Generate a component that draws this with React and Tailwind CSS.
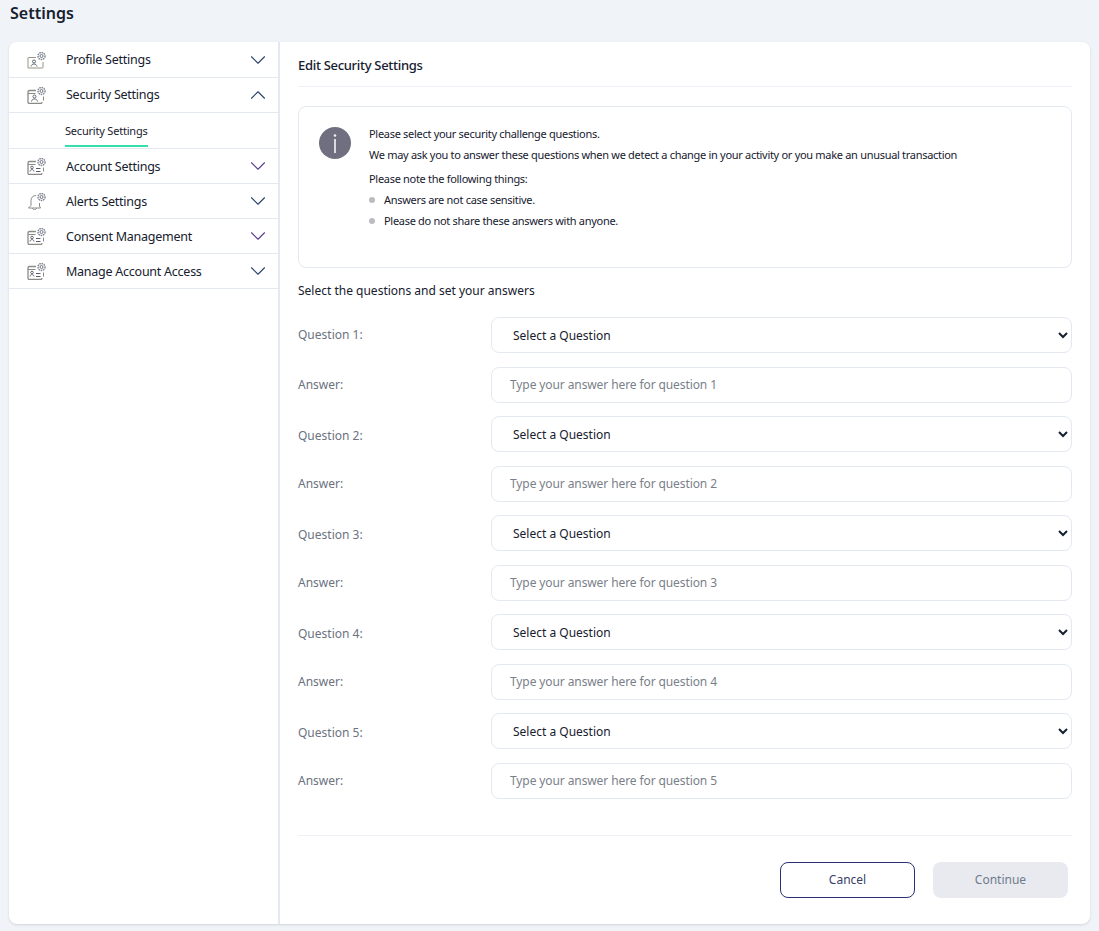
import React from 'react';
import { ChevronDown, ChevronUp } from 'lucide-react';

const GearBadge = () => (
  <g fill="none">
    <circle cx="14.500" cy="4" r="1.500" stroke="#6f7482" strokeWidth="1" />
    <circle cx="14.500" cy="4" r="3.500" stroke="#7d8290" strokeWidth="1.400" strokeDasharray="1.600 0.700" />
  </g>
);

const ProfileIcon = () => (
  <svg viewBox="0 0 19 17" className="h-[17px] w-[19px]" fill="none">
    <path d="M9 5.500H1.500a.5.500 0 0 0-.5.500v10h14.500a.5.500 0 0 0 .5-.5V10" stroke="#9a9488" strokeWidth="1" />
    <circle cx="7" cy="9.500" r="1.500" stroke="#555b68" strokeWidth="0.900" />
    <path d="M4 14.500c.4-1.700 1.400-2.500 3-2.500s2.600.8 3 2.500" stroke="#555b68" strokeWidth="0.900" />
    <GearBadge />
  </svg>
);

const LockCardIcon = () => (
  <svg viewBox="0 0 19 17" className="h-[17px] w-[19px]" fill="none">
    <path d="M9 3.500H2.500A1.500 1.500 0 0 0 1 5v10a1.500 1.500 0 0 0 1.500 1.500h11A1.500 1.500 0 0 0 15 15" stroke="#8c8a86" strokeWidth="1.300" />
    <path d="M1 6.500h7.500" stroke="#8c8a86" strokeWidth="1" />
    <circle cx="7.500" cy="9.500" r="1.500" stroke="#555b68" strokeWidth="0.900" />
    <path d="M4.500 14.500c.3-1.700 1.300-2.500 3-2.500s2.700.8 3 2.500" stroke="#555b68" strokeWidth="0.900" />
    <path d="M16.500 9.500v4" stroke="#8c8a86" strokeWidth="1" />
    <GearBadge />
  </svg>
);

const AccountIcon = () => (
  <svg viewBox="0 0 19 17" className="h-[17px] w-[19px]" fill="none">
    <path d="M9 3.500H2.500A1.500 1.500 0 0 0 1 5v10a1.500 1.500 0 0 0 1.500 1.500h11a1.500 1.500 0 0 0 1.500-1.500" stroke="#8c8a86" strokeWidth="1.300" />
    <path d="M1 6.500h7.500" stroke="#8c8a86" strokeWidth="1" />
    <circle cx="5" cy="9.500" r="1.300" stroke="#555b68" strokeWidth="0.900" />
    <path d="M3 13.500c.2-1.300.9-1.900 2-1.900s1.800.6 2 1.900" stroke="#555b68" strokeWidth="0.900" />
    <path d="M9 10.500h4.500M9 13.500h4.500" stroke="#555b68" strokeWidth="1" />
    <path d="M16.500 9.500v4" stroke="#8c8a86" strokeWidth="1" />
    <GearBadge />
  </svg>
);

const BellIcon = () => (
  <svg viewBox="0 0 19 17" className="h-[17px] w-[19px]" fill="none">
    <path d="M9 2.500C5.800 2.500 4 4.800 4 7.500v5L1.500 15h12L12.500 13v-3" stroke="#8c8a86" strokeWidth="1" />
    <path d="M5.500 15c.2 1.200 1 1.800 2 1.800s1.800-.6 2-1.800" stroke="#8c8a86" strokeWidth="1" />
    <GearBadge />
  </svg>
);

const menuItems = [
  { label: 'Profile Settings', icon: <ProfileIcon />, color: 'text-[#2b4468]' },
  { label: 'Security Settings', icon: <LockCardIcon />, open: true, color: 'text-[#2b4468]' },
  { label: 'Account Settings', icon: <AccountIcon />, color: 'text-[#5b3d8f]', low: true },
  { label: 'Alerts Settings', icon: <BellIcon />, color: 'text-[#2b4468]', low: true },
  { label: 'Consent Management', icon: <AccountIcon />, color: 'text-[#5b3d8f]', low: true },
  { label: 'Manage Account Access', icon: <AccountIcon />, color: 'text-[#2b4468]', low: true },
];

const questions = [1, 2, 3, 4, 5];

const SideMenu = () => (
  <aside className="w-[271px] shrink-0 border-r-2 border-[#e4e8f0] pt-px">
    {menuItems.map((item) => (
      <div key={item.label}>
        <div className="flex h-[35px] items-center border-b border-[#e4e8f0] pl-[18px] pr-[7px]">
          <span className="flex w-[39px] shrink-0 items-center">{item.icon}</span>
          <span className={`flex-1 text-[12.500px] tracking-[-0.25px] text-[#16202e] ${item.low ? 'pt-[2px]' : ''}`}>{item.label}</span>
          {item.open ? (
            <ChevronUp className={`h-[26px] w-[26px] ${item.color}`} strokeWidth={1} />
          ) : (
            <ChevronDown className={`h-[26px] w-[26px] ${item.color}`} strokeWidth={1} />
          )}
        </div>
        {item.open && (
          <div className="h-9 border-b border-[#e4e8f0] pl-14 pt-[10px]">
            <span className="block h-[24px] w-fit border-b-2 border-[#35dfae] text-[11px] leading-[16px] tracking-[-0.2px] text-[#16202e]">
              {item.label}
            </span>
          </div>
        )}
      </div>
    ))}
  </aside>
);

const InfoBox = () => (
  <div className="mt-[19px] flex h-[162px] rounded-lg border border-[#e4e8f0] pl-5 pt-5">
    <div className="flex h-8 w-8 shrink-0 items-center justify-center rounded-full bg-[#6f6f80]">
      <svg viewBox="0 0 4 19" className="h-[19px] w-1">
        <circle cx="2" cy="1.500" r="1.300" fill="#f2f2f5" />
        <rect x="1.100" y="5" width="1.800" height="14" fill="#e6e6ea" />
      </svg>
    </div>
    <div className="ml-[18px] text-[11px] leading-[20px] tracking-[-0.3px] text-[#16202e]">
      <p className="mt-[-3px]">Please select your security challenge questions.</p>
      <p className="mt-px">We may ask you to answer these questions when we detect a change in your activity or you make an unusual transaction</p>
      <p className="mt-[4px]">Please note the following things:</p>
      <ul className="mt-px">
        <li className="flex items-center gap-[9px] pb-px">
          <span className="h-[6px] w-[6px] rounded-full bg-[#bcbcc0]" />
          Answers are not case sensitive.
        </li>
        <li className="flex items-center gap-[9px]">
          <span className="h-[6px] w-[6px] rounded-full bg-[#bcbcc0]" />
          Please do not share these answers with anyone.
        </li>
      </ul>
    </div>
  </div>
);

const QuestionRow = ({ n }) => (
  <>
    <div className="flex h-[36px] items-center">
      <label className={`w-[193px] shrink-0 text-[12px] text-[#6b7280] ${n > 1 ? 'pt-[4px]' : ''}`}>Question {n}:</label>
      <select className="h-[36px] flex-1 rounded-lg border border-[#e4e8f0] bg-white pl-[17px] pr-[2px] text-[12px] text-[#16202e]">
        <option>Select a Question</option>
      </select>
    </div>
    <div className="mt-px flex h-[36px] items-center">
      <label className="w-[193px] shrink-0 text-[12px] text-[#6b7280]">Answer:</label>
      <input
        className="h-[36px] flex-1 rounded-lg border border-[#e4e8f0] bg-white px-[18px] pb-[2px] text-[12px] tracking-[-0.1px] text-[#16202e] placeholder:text-[#7a7f89]"
        placeholder={`Type your answer here for question ${n}`}
      />
    </div>
  </>
);

export default function App() {
  return (
    <div className="min-h-[931px] bg-[#f0f3f7] font-['Noto_Sans',sans-serif]">
      <h1 className="px-[10px] pt-px text-[16px] font-semibold leading-[24px] text-[#16202e]">Settings</h1>
      <div className="mx-[9px] mt-[17px] flex h-[882px] w-[1081px] overflow-hidden rounded-lg bg-white shadow-sm">
        <SideMenu />
        <main className="flex-1 px-[18px]">
          <h2 className="flex h-[45px] items-center border-b border-[#edf0f5] pt-[3px] text-[13px] font-medium tracking-[-0.3px] text-[#16202e]">
            Edit Security Settings
          </h2>
          <InfoBox />
          <p className="mt-[14px] text-[12px] leading-[18px] text-[#16202e]">Select the questions and set your answers</p>
          <div className="mt-[17px] flex flex-col gap-[13px]">
            {questions.map((n) => (
              <QuestionRow key={n} n={n} />
            ))}
          </div>
          <div className="mt-[36px] flex justify-end gap-[18px] border-t border-[#edf0f5] pr-1 pt-[26px]">
            <button className="h-9 w-[135px] rounded-lg border border-[#2a2f78] bg-white text-[12px] text-[#3a4168]">Cancel</button>
            <button className="h-9 w-[135px] rounded-lg bg-[#e9eaef] text-[12px] text-[#6f7a8c]">Continue</button>
          </div>
        </main>
      </div>
    </div>
  );
}
